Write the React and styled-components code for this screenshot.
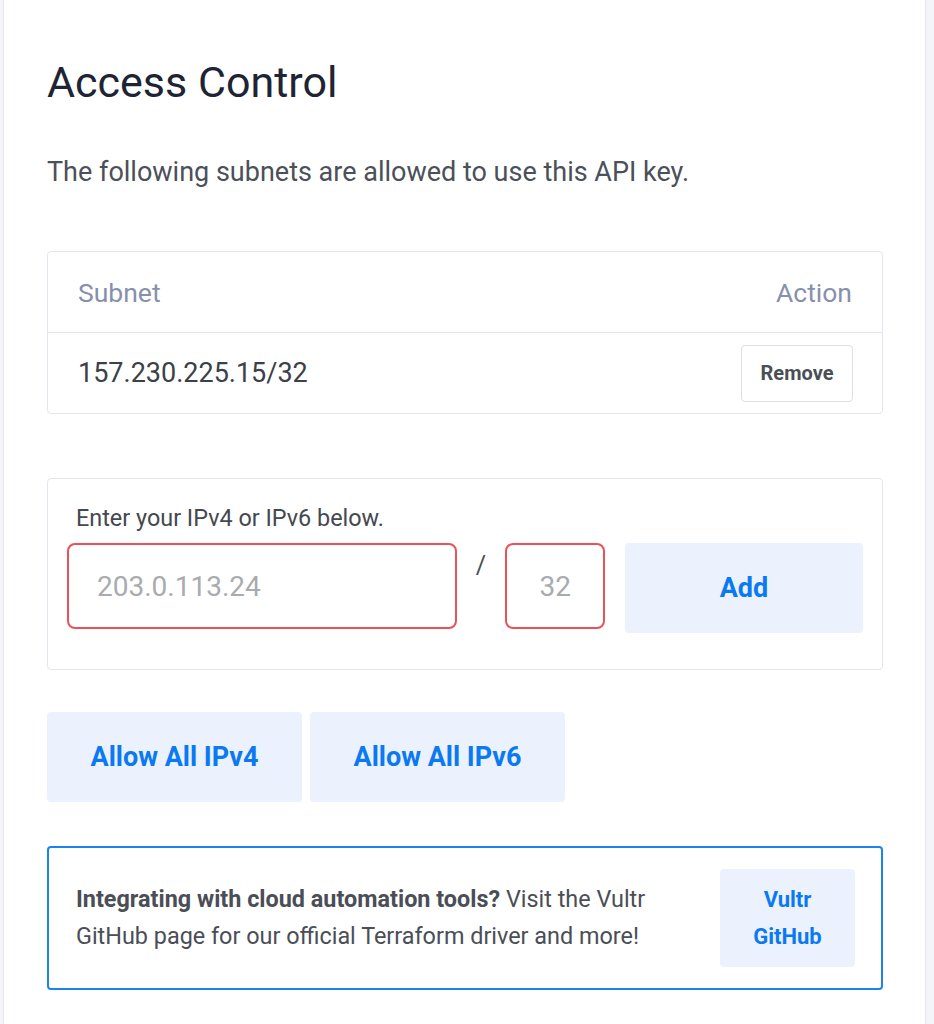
import React from "react";
import styled, { createGlobalStyle } from "styled-components";

const Global = createGlobalStyle`
  html, body { margin: 0; padding: 0; background: #f4f5f8; }
  body { font-family: Roboto, "Liberation Sans", Arial, sans-serif; -webkit-font-smoothing: antialiased; }
  * { box-sizing: border-box; }
`;

const Page = styled.div`
  margin-left: 3px;
  width: 923px;
  min-height: 1024px;
  background: #fff;
  border-left: 1px solid #e4e7ed;
  border-right: 1px solid #e4e7ed;
  padding: 52px 42px 40px 43px;
`;

const Title = styled.h1`
  margin: 0;
  font-size: 43px;
  font-weight: 400;
  line-height: 60px;
  color: #1e2433;
`;

const Lead = styled.p`
  margin: 42px 0 0;
  font-size: 27px;
  line-height: 36px;
  color: #4b5059;
`;

const Table = styled.div`
  margin-top: 61px;
  border: 1px solid #e3e6eb;
  border-radius: 4px;
`;

const Row = styled.div`
  display: flex;
  align-items: center;
  justify-content: space-between;
  height: ${p => (p.$head ? "80px" : "81px")};
  padding: 0 30px 0 30px;
  border-top: ${p => (p.$head ? "none" : "1px solid #e3e6eb")};
`;

const HeadCell = styled.span`
  font-size: 26.5px;
  color: #8690ad;
`;

const Cell = styled.span`
  font-size: 27px;
  color: #3c4048;
`;

const RemoveButton = styled.button`
  width: 112px;
  height: 57px;
  background: #fff;
  border: 1px solid #dcdfe4;
  border-radius: 4px;
  font-family: inherit;
  font-size: 20px;
  font-weight: 700;
  color: #4a4e56;
  margin-right: -1px;
`;

const Card = styled.div`
  margin-top: 64px;
  border: 1px solid #e3e6eb;
  border-radius: 4px;
  padding: 26px 19px 36px 19px;
`;

const Label = styled.div`
  font-size: 23.4px;
  line-height: 26px;
  color: #44484f;
  padding-left: 9px;
`;

const InputRow = styled.div`
  display: flex;
  align-items: flex-start;
  margin-top: 12px;
`;

const Field = styled.div`
  width: ${p => p.$w}px;
  height: 86px;
  border: 2px solid #ea5257;
  border-radius: 8px;
  display: flex;
  align-items: center;
  justify-content: ${p => (p.$center ? "center" : "flex-start")};
  padding-left: ${p => (p.$center ? "0" : "28px")};
  font-size: 28px;
  color: #a9abaf;
`;

const Slash = styled.span`
  width: 49px;
  text-align: center;
  font-size: 25px;
  color: #4a4e56;
  padding-top: 8px;
`;

const SoftButton = styled.button`
  width: ${p => p.$w}px;
  height: ${p => p.$h}px;
  background: #ecf2fd;
  border: none;
  border-radius: 4px;
  font-family: inherit;
  font-weight: 700;
  font-size: ${p => p.$fs || 27}px;
  line-height: ${p => p.$lh || "normal"};
  color: #0b79f2;
  padding: 0;
`;

const AddButton = styled(SoftButton)`
  margin-left: 20px;
`;

const AllowRow = styled.div`
  display: flex;
  gap: 8px;
  margin-top: 42px;
`;

const Info = styled.div`
  margin-top: 44px;
  border: 2px solid #1c82f3;
  border-radius: 4px;
  display: flex;
  align-items: center;
  justify-content: space-between;
  padding: 21px 26px 21px 27px;
`;

const InfoText = styled.p`
  margin: 0;
  font-size: 23.4px;
  line-height: 37px;
  color: #4a4e56;
  width: 600px;
`;

const Strong = styled.strong`
  font-weight: 700;
`;

export default function App() {
  return (
    <>
      <Global />
      <Page>
        <Title>Access Control</Title>
        <Lead>The following subnets are allowed to use this API key.</Lead>
        <Table>
          <Row $head>
            <HeadCell>Subnet</HeadCell>
            <HeadCell>Action</HeadCell>
          </Row>
          <Row>
            <Cell>157.230.225.15/32</Cell>
            <RemoveButton>Remove</RemoveButton>
          </Row>
        </Table>
        <Card>
          <Label>Enter your IPv4 or IPv6 below.</Label>
          <InputRow>
            <Field $w={391}>203.0.113.24</Field>
            <Slash>/</Slash>
            <Field $w={100} $center>32</Field>
            <AddButton $w={239} $h={90}>Add</AddButton>
          </InputRow>
        </Card>
        <AllowRow>
          <SoftButton $w={255} $h={90}>Allow All IPv4</SoftButton>
          <SoftButton $w={255} $h={90}>Allow All IPv6</SoftButton>
        </AllowRow>
        <Info>
          <InfoText>
            <Strong>Integrating with cloud automation tools?</Strong> Visit the Vultr GitHub page for our official Terraform driver and more!
          </InfoText>
          <SoftButton $w={135} $h={98} $fs={22} $lh="37px">Vultr<br />GitHub</SoftButton>
        </Info>
      </Page>
    </>
  );
}
